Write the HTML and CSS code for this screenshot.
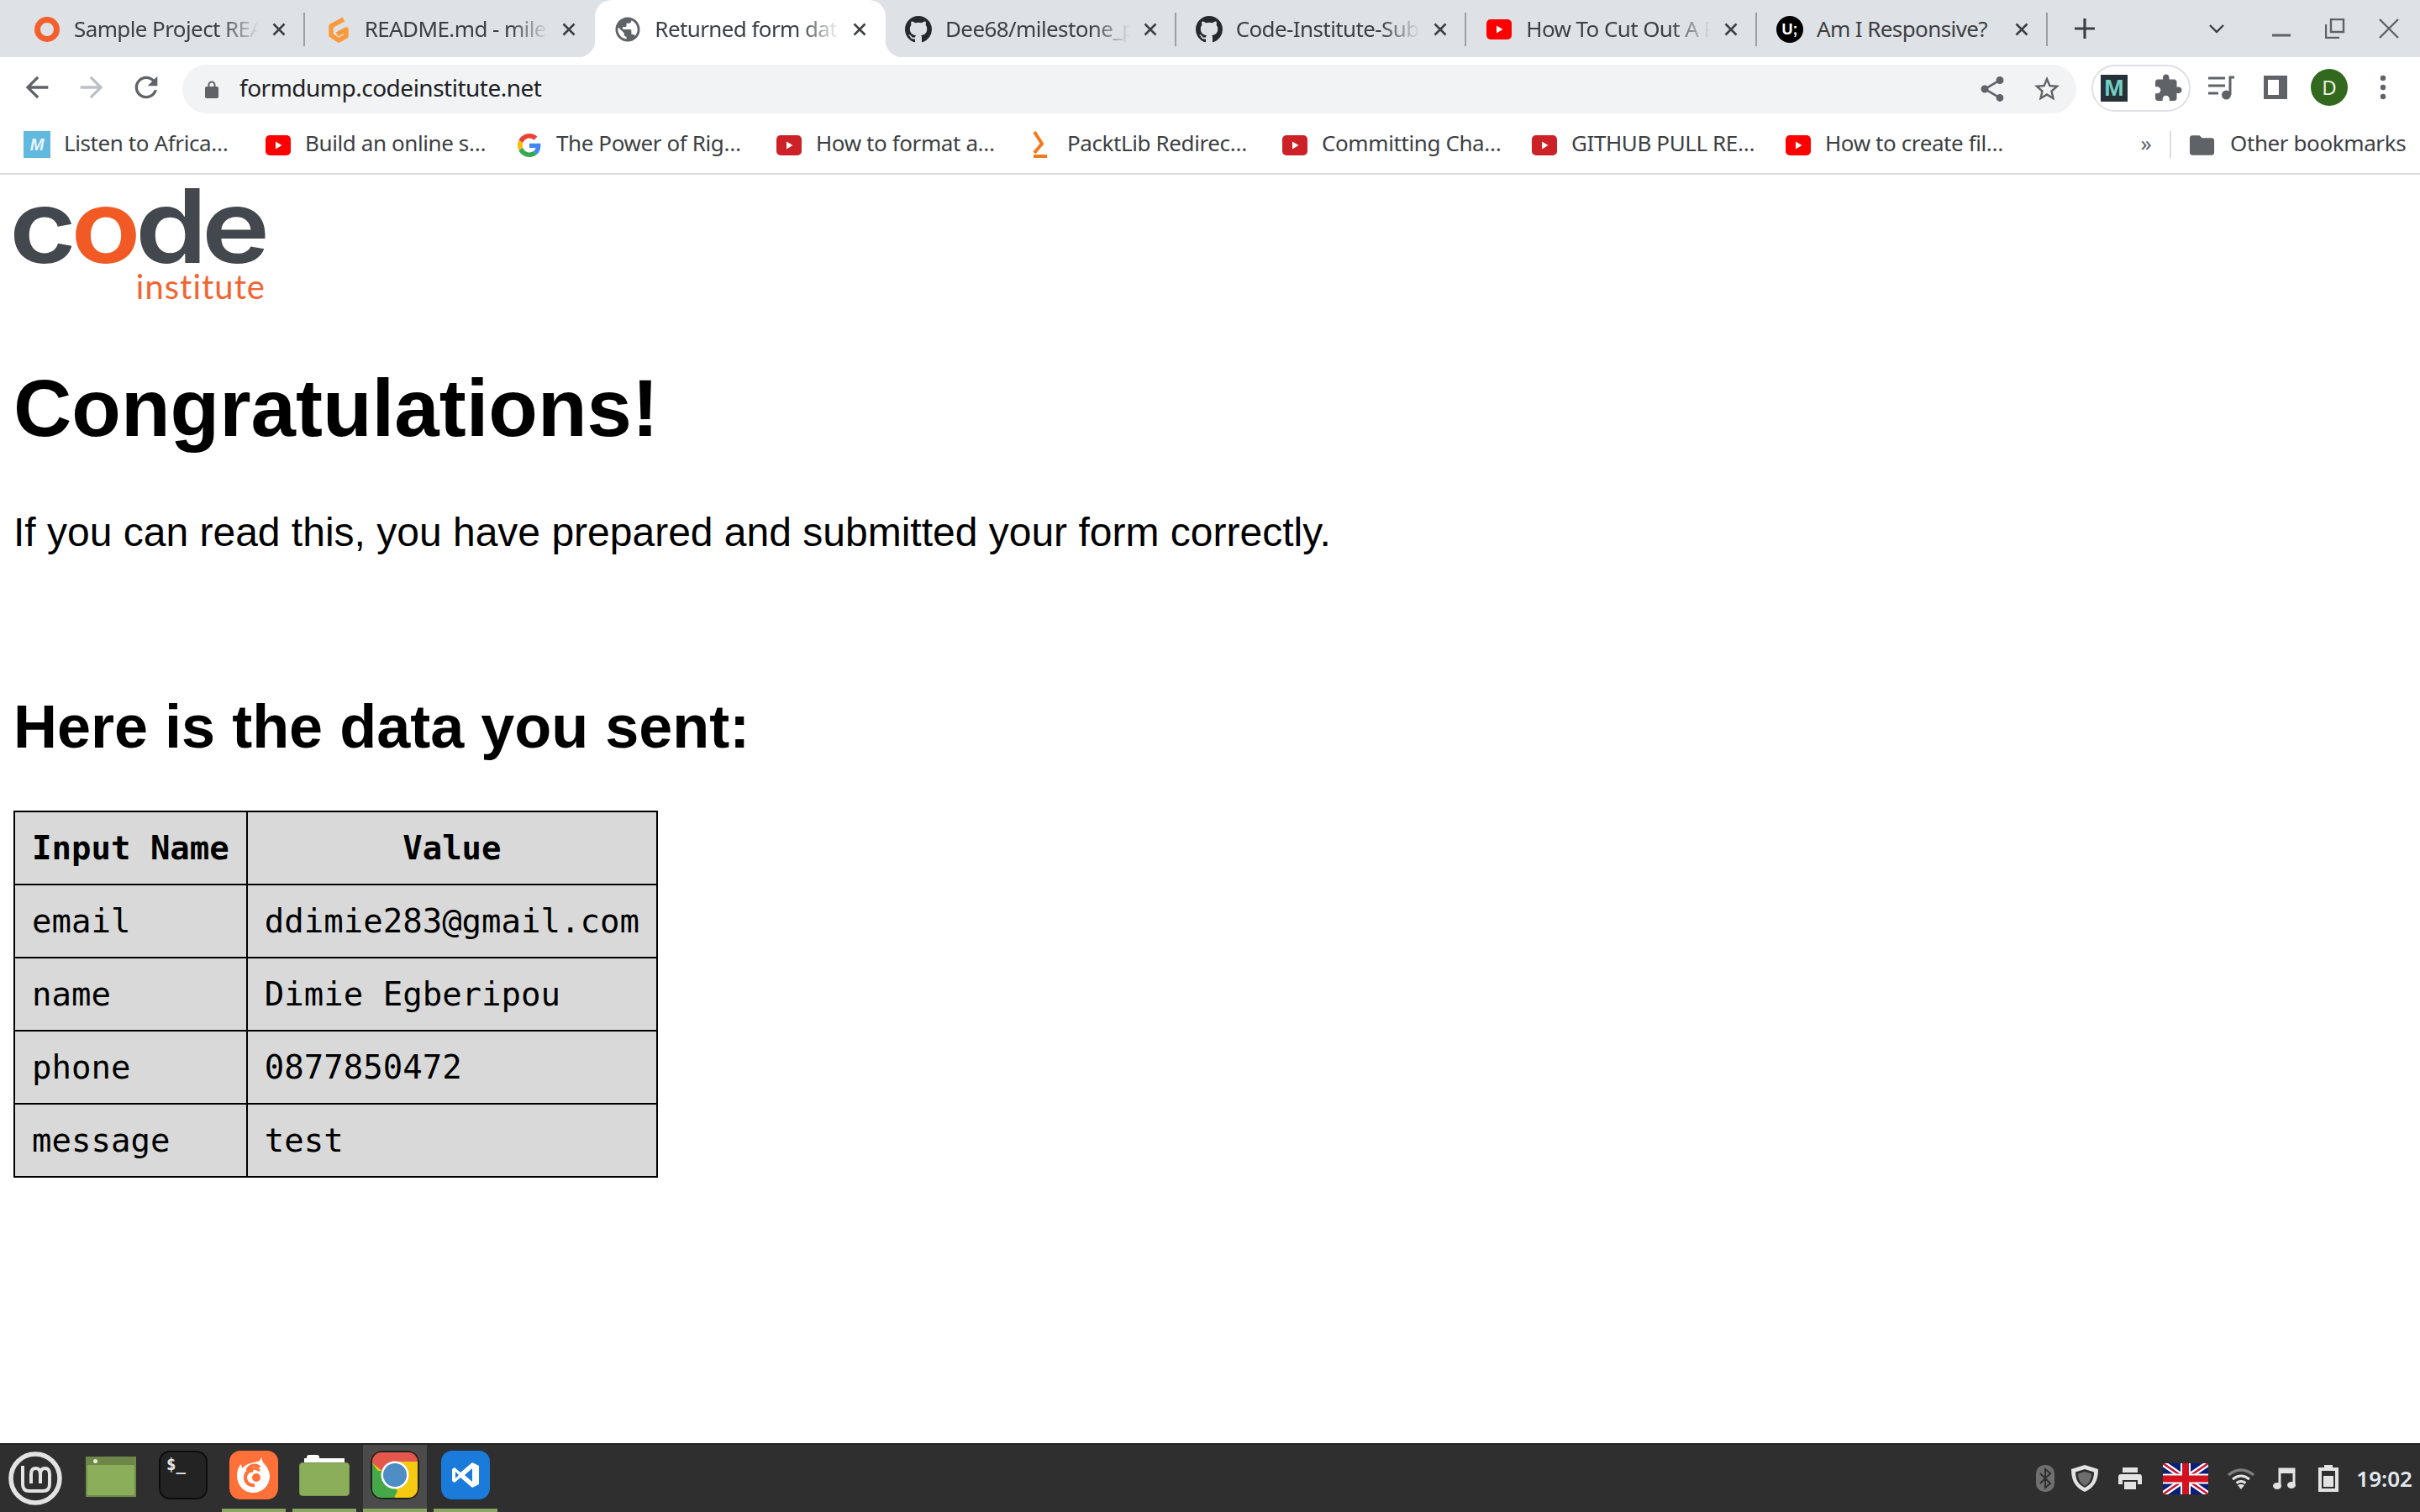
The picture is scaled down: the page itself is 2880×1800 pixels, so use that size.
FILE: index.html
```html
<!DOCTYPE html>
<html lang="en">
<head>
<meta charset="utf-8">
<title>Returned form data</title>
<link rel="stylesheet" href="styles.css">
</head>
<body>
<svg class="defs" width="0" height="0" aria-hidden="true">
  <symbol id="gh" viewBox="0 0 16 16"><path d="M8 0C3.58 0 0 3.58 0 8c0 3.54 2.29 6.53 5.47 7.59.4.07.55-.17.55-.38 0-.19-.01-.82-.01-1.49-2.01.37-2.53-.49-2.69-.94-.09-.23-.48-.94-.82-1.13-.28-.15-.68-.52-.01-.53.63-.01 1.08.58 1.23.82.72 1.21 1.87.87 2.33.66.07-.52.28-.87.51-1.07-1.78-.2-3.64-.89-3.64-3.95 0-.87.31-1.59.82-2.15-.08-.2-.36-1.02.08-2.12 0 0 .67-.21 2.2.82.64-.18 1.32-.27 2-.27.68 0 1.36.09 2 .27 1.53-1.04 2.2-.82 2.2-.82.44 1.1.16 1.92.08 2.12.51.56.82 1.27.82 2.15 0 3.07-1.87 3.75-3.65 3.95.29.25.54.73.54 1.48 0 1.07-.01 1.93-.01 2.2 0 .21.15.46.55.38A8.013 8.013 0 0016 8c0-4.42-3.58-8-8-8z" fill="#24292e"/></symbol>
  <symbol id="x" viewBox="0 0 16 16"><path d="M1.5 1.5l13 13M14.5 1.5l-13 13" stroke="#3c4043" stroke-width="2.6" fill="none"/></symbol>
  <symbol id="yt" viewBox="0 0 32 28"><rect x="1" y="2" width="30" height="24" rx="5" fill="currentColor"/><path d="M13 9.500l7.500 4.500-7.500 4.500z" fill="#fff"/></symbol>
</svg>

<header class="tabstrip">
  <div class="tab">
    <svg class="fav" viewBox="0 0 32 32"><circle cx="16" cy="16" r="11.500" fill="none" stroke="#f4602c" stroke-width="7"/></svg>
    <span class="title">Sample Project README</span>
    <svg class="close"><use href="#x"/></svg>
  </div>
  <div class="tab no-sep">
    <svg class="fav" viewBox="0 0 32 32"><path d="M23 4L8 12v11l9 6 9-5v-8l-11 6" fill="none" stroke="#fb9a3d" stroke-width="5.500" stroke-linejoin="round"/></svg>
    <span class="title">README.md - milestone</span>
    <svg class="close"><use href="#x"/></svg>
  </div>
  <div class="tab active no-sep">
    <svg class="fav" viewBox="1 1 22 22"><path fill="#5f6368" d="M12 2C6.480 2 2 6.480 2 12s4.480 10 10 10 10-4.480 10-10S17.520 2 12 2zm-1 17.930c-3.950-.490-7-3.850-7-7.930 0-.620.080-1.210.210-1.790L9 15v1c0 1.100.900 2 2 2v1.930zm6.900-2.540c-.260-.810-1-1.390-1.900-1.390h-1v-3c0-.550-.450-1-1-1H8v-2h2c.550 0 1-.450 1-1V7h2c1.100 0 2-.900 2-2v-.410c2.930 1.190 5 4.060 5 7.410 0 2.080-.800 3.970-2.100 5.390z"/></svg>
    <span class="title">Returned form data</span>
    <svg class="close"><use href="#x"/></svg>
  </div>
  <div class="tab">
    <svg class="fav"><use href="#gh"/></svg>
    <span class="title">Dee68/milestone_project</span>
    <svg class="close"><use href="#x"/></svg>
  </div>
  <div class="tab">
    <svg class="fav"><use href="#gh"/></svg>
    <span class="title">Code-Institute-Submissions</span>
    <svg class="close"><use href="#x"/></svg>
  </div>
  <div class="tab">
    <svg class="fav yt-red"><use href="#yt"/></svg>
    <span class="title">How To Cut Out A Person</span>
    <svg class="close"><use href="#x"/></svg>
  </div>
  <div class="tab">
    <span class="fav ui-badge">U;</span>
    <span class="title plain">Am I Responsive?</span>
    <svg class="close"><use href="#x"/></svg>
  </div>
  <svg class="newtab" viewBox="0 0 26 26"><path d="M13 1v24M1 13h24" stroke="#3c4043" stroke-width="3.200"/></svg>
  <div class="win-controls">
    <div class="win-btn chev"><svg width="20" height="12" viewBox="0 0 20 12"><path d="M2 2l8 8 8-8" fill="none" stroke="#3c4043" stroke-width="2.400"/></svg></div>
    <div class="win-btn"><svg width="22" height="22" viewBox="0 0 22 22"><path d="M0 19h22" stroke="#5f6368" stroke-width="3"/></svg></div>
    <div class="win-btn"><svg width="24" height="24" viewBox="0 0 24 24"><path d="M7 1h15v15H7zM1 7v16h16" fill="none" stroke="#5f6368" stroke-width="2.400"/></svg></div>
    <div class="win-btn"><svg width="24" height="24" viewBox="0 0 24 24"><path d="M1 1l22 22M23 1L1 23" stroke="#5f6368" stroke-width="2.400"/></svg></div>
  </div>
</header>

<nav class="toolbar">
  <div class="nav-btn"><svg class="ico" viewBox="0 0 24 24"><path fill="#5f6368" d="M20 11H7.830l5.590-5.590L12 4l-8 8 8 8 1.410-1.410L7.830 13H20v-2z"/></svg></div>
  <div class="nav-btn"><svg class="ico flip" viewBox="0 0 24 24"><path fill="#bdc1c6" d="M20 11H7.830l5.590-5.590L12 4l-8 8 8 8 1.410-1.410L7.830 13H20v-2z"/></svg></div>
  <div class="nav-btn"><svg class="ico" viewBox="0 0 24 24"><path fill="#5f6368" d="M17.650 6.350A7.958 7.958 0 0012 4c-4.420 0-7.990 3.580-7.990 8s3.570 8 7.990 8c3.730 0 6.840-2.550 7.730-6h-2.080A5.990 5.990 0 0112 18c-3.310 0-6-2.690-6-6s2.690-6 6-6c1.660 0 3.140.690 4.220 1.780L13 11h7V4l-2.350 2.350z"/></svg></div>
  <div class="omnibox">
    <svg class="lock" viewBox="0 0 16 22"><path d="M4.500 9V6a3.500 3.500 0 017 0v3" fill="none" stroke="#5f6368" stroke-width="2"/><rect x="0" y="8" width="16" height="14" rx="2" fill="#5f6368"/></svg>
    <span class="url">formdump.codeinstitute.net</span>
    <div class="omni-actions">
      <svg class="ico-s" viewBox="0 0 24 24"><path fill="#5f6368" d="M18 16.080c-.760 0-1.440.300-1.960.770L8.910 12.700c.050-.230.090-.460.090-.700s-.040-.470-.090-.700l7.050-4.110c.540.500 1.250.810 2.040.810 1.660 0 3-1.340 3-3s-1.340-3-3-3-3 1.340-3 3c0 .240.040.470.090.700L8.040 9.810C7.500 9.310 6.790 9 6 9c-1.660 0-3 1.340-3 3s1.340 3 3 3c.790 0 1.500-.310 2.040-.810l7.120 4.160c-.050.210-.080.430-.080.650 0 1.610 1.310 2.920 2.920 2.920s2.920-1.310 2.920-2.920-1.310-2.920-2.920-2.920z"/></svg>
      <svg class="ico-s" viewBox="0 0 24 24"><path fill="#5f6368" d="M22 9.240l-7.190-.620L12 2 9.190 8.630 2 9.240l5.460 4.730L5.820 21 12 17.270 18.180 21l-1.630-7.030L22 9.240zM12 15.400l-3.760 2.270 1-4.280-3.320-2.880 4.380-.380L12 6.100l1.710 4.040 4.380.380-3.320 2.880 1 4.280L12 15.400z"/></svg>
    </div>
  </div>
  <div class="ext-pill">
    <span class="ext-m">M</span>
    <svg class="ico-s puzzle" viewBox="0 0 24 24"><path fill="#5f6368" d="M20.500 11H19V7c0-1.100-.900-2-2-2h-4V3.500C13 2.120 11.880 1 10.500 1S8 2.120 8 3.500V5H4c-1.100 0-1.990.900-1.990 2v3.800H3.500c1.490 0 2.700 1.210 2.700 2.700s-1.210 2.700-2.700 2.700H2V20c0 1.100.900 2 2 2h3.800v-1.500c0-1.490 1.210-2.700 2.700-2.700 1.490 0 2.700 1.210 2.700 2.700V22H17c1.100 0 2-.900 2-2v-4h1.500c1.380 0 2.500-1.120 2.500-2.500S21.880 11 20.500 11z"/></svg>
  </div>
  <div class="tool-btn"><svg class="tool-ico" viewBox="0 0 32 30"><path d="M0 4h20M0 13h20M0 22h12" stroke="#5f6368" stroke-width="3"/><path d="M26 24V3h5" fill="none" stroke="#5f6368" stroke-width="3"/><circle cx="21.500" cy="24" r="5.500" fill="#5f6368"/></svg></div>
  <div class="tool-btn"><span class="sidebar-ico"></span></div>
  <div class="tool-btn"><span class="avatar">D</span></div>
  <div class="tool-btn"><svg class="dots" viewBox="0 0 8 30"><circle cx="4" cy="4" r="3.200" fill="#5f6368"/><circle cx="4" cy="15" r="3.200" fill="#5f6368"/><circle cx="4" cy="26" r="3.200" fill="#5f6368"/></svg></div>
</nav>

<nav class="bookmarks">
  <div class="bm"><span class="bm-ico bm-m">M</span><span>Listen to Africa…</span></div>
  <div class="bm"><svg class="bm-ico yt-red"><use href="#yt"/></svg><span>Build an online s…</span></div>
  <div class="bm"><svg class="bm-ico" viewBox="0 0 48 48"><path fill="#EA4335" d="M24 9.500c3.540 0 6.710 1.220 9.210 3.600l6.850-6.850C35.900 2.380 30.470 0 24 0 14.620 0 6.510 5.380 2.560 13.220l7.980 6.190C12.430 13.720 17.740 9.500 24 9.500z"/><path fill="#4285F4" d="M46.980 24.550c0-1.570-.150-3.090-.380-4.550H24v9.020h12.940c-.580 2.960-2.260 5.480-4.780 7.180l7.730 6c4.510-4.180 7.090-10.360 7.090-17.650z"/><path fill="#FBBC05" d="M10.530 28.590c-.480-1.450-.760-2.990-.760-4.590s.270-3.140.760-4.590l-7.980-6.190C.920 16.460 0 20.120 0 24c0 3.880.920 7.540 2.560 10.780l7.970-6.190z"/><path fill="#34A853" d="M24 48c6.480 0 11.930-2.130 15.890-5.810l-7.730-6c-2.150 1.450-4.920 2.300-8.160 2.300-6.260 0-11.570-4.220-13.470-9.910l-7.980 6.190C6.510 42.620 14.620 48 24 48z"/></svg><span>The Power of Rig…</span></div>
  <div class="bm"><svg class="bm-ico yt-dark"><use href="#yt"/></svg><span>How to format a…</span></div>
  <div class="bm"><svg class="bm-ico bm-tall" viewBox="0 0 32 32"><path d="M9 1l9 14-9 11" fill="none" stroke="#f47a20" stroke-width="4"/><path d="M8 30h16" stroke="#f47a20" stroke-width="4"/></svg><span>PacktLib Redirec…</span></div>
  <div class="bm"><svg class="bm-ico yt-dark"><use href="#yt"/></svg><span>Committing Cha…</span></div>
  <div class="bm"><svg class="bm-ico yt-dark"><use href="#yt"/></svg><span>GITHUB PULL RE…</span></div>
  <div class="bm"><svg class="bm-ico yt-red"><use href="#yt"/></svg><span>How to create fil…</span></div>
  <span class="more">»</span>
  <span class="bm-sep"></span>
  <div class="bm"><svg class="bm-ico" viewBox="2 3 22 18"><path fill="#5f6368" d="M10 4H4c-1.100 0-2 .900-2 2v12c0 1.100.900 2 2 2h16c1.100 0 2-.900 2-2V8c0-1.100-.900-2-2-2h-8l-2-2z"/></svg><span>Other bookmarks</span></div>
</nav>

<main class="page">
  <div class="logo">
    <div class="logo-code">c<span class="logo-o">o</span>de</div>
    <div class="logo-inst">institute</div>
  </div>
  <h1>Congratulations!</h1>
  <p>If you can read this, you have prepared and submitted your form correctly.</p>
  <h2>Here is the data you sent:</h2>
  <table>
    <thead><tr><th>Input Name</th><th>Value</th></tr></thead>
    <tbody>
      <tr><td>email</td><td>ddimie283@gmail.com</td></tr>
      <tr><td>name</td><td>Dimie Egberipou</td></tr>
      <tr><td>phone</td><td>0877850472</td></tr>
      <tr><td>message</td><td>test</td></tr>
    </tbody>
  </table>
</main>

<footer class="taskbar">
  <div class="mint"><svg viewBox="0 0 64 64" width="64" height="64"><circle cx="32" cy="32" r="29" fill="none" stroke="#e3e3e3" stroke-width="5.500"/><path d="M17 17v22q0 8 8 8h16q8 0 8-8V27q0-7-5.500-7T38 27v11M38 27q0-7-5.500-7T27 27v11" fill="none" stroke="#e3e3e3" stroke-width="4"/></svg></div>
  <div class="launch">
    <div class="launch-item"><div class="win-ico"><span></span></div></div>
    <div class="launch-item"><div class="term-ico">$_</div></div>
    <div class="launch-item running">
      <svg class="app" viewBox="0 0 58 58"><rect width="58" height="58" rx="13" fill="#ff7139"/><path d="M9 29c0-5 2-10 5-13l1 5c3-3 6-5 10-6 5-1 8-2 11-3 1-2 2-3 2-5 1 4 1 6 3 8 4 5 7 9 7 15 0 12-9 20-20 20S9 41 9 29z" fill="#fff"/><path d="M36 20c-4-4-11-3-14 2-1 2 4 1 6 2-4-1-9 2-9 8 0 6 5 10 11 9" fill="none" stroke="#ff7139" stroke-width="4"/><path d="M24 23c4-3 9-2 12 1" fill="none" stroke="#ff7139" stroke-width="3"/><circle cx="32" cy="32" r="5" fill="#ff7139"/></svg>
    </div>
    <div class="launch-item running"><div class="folder-ico"><span class="folder-tab"></span><span class="folder-paper"></span><span class="folder-body"></span></div></div>
    <div class="launch-item running hovered">
      <svg class="app" viewBox="0 0 58 58"><defs><clipPath id="cr"><rect width="58" height="58" rx="13"/></clipPath></defs><g clip-path="url(#cr)"><rect width="58" height="58" fill="#f6c913"/><path d="M0 0h58v13H29L16 26 0 13z" fill="#e4574c"/><path d="M0 12l22 30 8 16H0z" fill="#45a848"/><path d="M15 24l17 24-5 10H0V24z" fill="#45a848"/><circle cx="29" cy="29" r="16.500" fill="#fff"/><circle cx="29" cy="29" r="14" fill="#4f8ec4"/></g><rect x="1" y="1" width="56" height="56" rx="12" fill="none" stroke="#222" stroke-width="2"/></svg>
    </div>
    <div class="launch-item running">
      <svg class="app" viewBox="0 0 58 58"><rect width="58" height="58" rx="13" fill="#1b7bdb"/><path d="M37 14l8 4v22l-8 4-14-12-7 6-3-2V22l3-2 7 6zM37 21l-9 8 9 8zM17 25v8l4-4z" fill="#fff" fill-rule="evenodd"/></svg>
    </div>
  </div>
  <div class="tray">
    <svg class="t-bt" viewBox="0 0 22 32"><rect width="22" height="32" rx="10" fill="#6f6f6f"/><path d="M5 10l12 12-6 5V5l6 5L5 22" fill="none" stroke="#2f2f2f" stroke-width="2"/></svg>
    <svg class="t-shield" viewBox="0 0 32 32"><path d="M16 0l16 5c0 14-5 22-16 27C5 27 0 19 0 5z" fill="#e3e3e3"/><path d="M16 5l11 3.500c0 10-4 15-11 18.500C9 23.500 5 18.500 5 8.500z" fill="#2f2f2f"/><path d="M16 8l8 2.500c0 7-3 11.500-8 14.500-5-3-8-7.500-8-14.500z" fill="#6d6d6d"/></svg>
    <svg class="t-print" viewBox="0 0 28 26"><path fill="#e3e3e3" d="M5 0h18v6H5zM3 8h22q3 0 3 3v9h-5v-5H5v5H0v-9q0-3 3-3zM7 17h14v9H7z"/></svg>
    <svg class="t-flag" viewBox="0 0 54 37"><rect width="54" height="37" rx="2" fill="#0a1f78"/><path d="M0 0l54 37M54 0L0 37" stroke="#fff" stroke-width="7"/><path d="M0 0l54 37M54 0L0 37" stroke="#c8102e" stroke-width="2.400"/><path d="M27 0v37M0 18.500h54" stroke="#fff" stroke-width="12"/><path d="M27 0v37M0 18.500h54" stroke="#d3131f" stroke-width="8"/></svg>
    <svg class="t-wifi" viewBox="0 0 32 26"><path d="M1 9q15-12 30 0" fill="none" stroke="#7d7d7d" stroke-width="3.500"/><path d="M6 14q10-8 20 0M10.500 18.500q5.500-4 11 0" fill="none" stroke="#e3e3e3" stroke-width="3"/><path d="M16 26l-4-5q4-2 8 0z" fill="#e3e3e3"/></svg>
    <svg class="t-music" viewBox="0 0 27 26"><path d="M8 22V2h17v18" fill="none" stroke="#e3e3e3" stroke-width="3"/><path d="M8 1h18v6H8z" fill="#e3e3e3"/><ellipse cx="5" cy="22" rx="5" ry="4" fill="#e3e3e3"/><ellipse cx="22" cy="21" rx="5" ry="4" fill="#e3e3e3"/></svg>
    <svg class="t-batt" viewBox="0 0 24 32"><path d="M7 0h10v3h7v29H0V3h7zM4 7v21h16V7z" fill="#e3e3e3" fill-rule="evenodd"/><rect x="6" y="13" width="12" height="13" fill="#e3e3e3"/></svg>
    <span class="clock">19:02</span>
  </div>
</footer>
</body>
</html>
```
FILE: styles.css
```css
* { box-sizing: border-box; }
html, body { margin: 0; padding: 0; }
body {
  width: 2880px;
  height: 1800px;
  overflow: hidden;
  display: flex;
  flex-direction: column;
  background: #fff;
  font-family: "Liberation Sans", Arial, sans-serif;
}
.defs { position: absolute; }

/* tab strip */
.tabstrip {
  height: 68px;
  flex: none;
  display: flex;
  align-items: stretch;
  padding-left: 17px;
  background: #dee1e6;
  font-family: "Noto Sans", sans-serif;
}
.tab {
  position: relative;
  width: 345.67px;
  flex: none;
  display: flex;
  align-items: center;
  gap: 16px;
  padding: 2px 23px 0 23px;
  color: #3c4043;
}
.tab::after {
  content: "";
  position: absolute;
  right: 0;
  top: 15px;
  width: 2px;
  height: 40px;
  background: #9aa0a6;
}
.tab.no-sep::after { display: none; }
.tab.active {
  background: #fff;
  border-radius: 20px 20px 0 0;
}
.tab.active::before,
.tab.active::after {
  content: "";
  display: block;
  position: absolute;
  top: auto;
  bottom: 0;
  width: 20px;
  height: 20px;
}
.tab.active::before {
  left: -20px;
  background: radial-gradient(circle at 0 0, transparent 20px, #fff 20.5px);
}
.tab.active::after {
  right: -20px;
  background: radial-gradient(circle at 100% 0, transparent 20px, #fff 20.5px);
}
.fav { width: 32px; height: 32px; flex: none; }
.yt-red { color: #f00; }
.yt-dark { color: #cc2127; }
.ui-badge {
  border-radius: 50%;
  background: #000;
  color: #fff;
  font: 700 18px/32px "Liberation Sans", sans-serif;
  text-align: center;
}
.title {
  flex: 1;
  min-width: 0;
  overflow: hidden;
  white-space: nowrap;
  font-size: 26px;
  line-height: 36px;
  margin-top: -3px;
  letter-spacing: -0.6px;
  -webkit-mask-image: linear-gradient(to right, #000 79%, transparent 100%);
  mask-image: linear-gradient(to right, #000 79%, transparent 100%);
}
.title.plain { -webkit-mask-image: none; mask-image: none; }
.close { width: 16px; height: 16px; flex: none; }
.newtab { width: 26px; height: 26px; flex: none; margin: 21px 0 0 31px; }
.win-controls { margin-left: auto; padding-right: 5px; display: flex; }
.win-btn { width: 64px; display: flex; align-items: center; justify-content: center; }
.win-btn.chev { margin-right: 13px; }

/* toolbar */
.toolbar {
  height: 72px;
  flex: none;
  display: flex;
  align-items: center;
  padding: 0 12px 0 11px;
  font-family: "Noto Sans", sans-serif;
}
.nav-btn { width: 65px; display: flex; justify-content: center; flex: none; }
.ico { width: 40px; height: 40px; flex: none; }
.ico-s { width: 36px; height: 36px; flex: none; }
.flip { transform: scaleX(-1); }
.omnibox {
  flex: 1;
  height: 58px;
  margin: 4px 0 0 11px;
  padding: 0 17px 0 27px;
  display: flex;
  align-items: center;
  gap: 25px;
  background: #f1f3f4;
  border-radius: 29px;
}
.lock { width: 16px; height: 22px; flex: none; }
.url { font-size: 28px; line-height: 36px; margin-top: -4px; letter-spacing: -0.5px; color: #202124; }
.omni-actions { margin-left: auto; display: flex; gap: 29px; }
.ext-pill {
  width: 118px;
  height: 56px;
  margin: 2px 5px 0 18px;
  padding-left: 9px;
  display: flex;
  align-items: center;
  flex: none;
  border: 2px solid #dfe1e5;
  border-radius: 28px;
}
.ext-m {
  width: 32px;
  height: 32px;
  flex: none;
  background: #263238;
  color: #75cfc4;
  font: 700 28px/32px "Liberation Sans", sans-serif;
  text-align: center;
}
.puzzle { margin-left: 30px; }
.tool-btn { width: 64px; flex: none; display: flex; justify-content: center; align-items: center; }
.tool-ico { width: 32px; height: 30px; }
.sidebar-ico {
  width: 28px;
  height: 28px;
  border: 5px solid #5f6368;
  border-right-width: 10px;
}
.avatar {
  width: 44px;
  height: 44px;
  border-radius: 50%;
  background: #33691e;
  color: #e8f0e4;
  font-size: 24px;
  line-height: 44px;
  text-align: center;
}
.dots { width: 8px; height: 30px; }

/* bookmarks */
.bookmarks {
  height: 68px;
  flex: none;
  display: grid;
  grid-template-columns: 287px 299px 309px 299px 303px 297px 302px 406px 48px 28px 1fr;
  align-items: center;
  padding: 0 0 6px 28px;
  border-bottom: 2px solid #dadce0;
  font-family: "Noto Sans", sans-serif;
  font-size: 26px;
  letter-spacing: -0.4px;
  color: #3c4043;
}
.bm { display: flex; align-items: center; gap: 16px; white-space: nowrap; }
.bm-ico { width: 32px; height: 28px; flex: none; margin-top: 5px; }
.bm-tall { height: 32px; margin-top: 3px; }
.bm-m {
  height: 32px;
  margin-top: 3px;
  background: #62b9de;
  color: #e8f6fb;
  font: italic 700 20px/32px "Liberation Sans", sans-serif;
  text-align: center;
}
.more { font-size: 26px; color: #5f6368; justify-self: center; }
.bm-sep { width: 2px; height: 32px; margin: 4px 0 0 4px; background: #dadce0; }

/* page */
.page { flex: 1; min-height: 0; padding: 16px 16px 0; color: #000; }
.logo { width: 300px; }
.logo-code {
  font: 600 122px/89px Inter, sans-serif;
  letter-spacing: -6px;
  color: #43474e;
  white-space: nowrap;
  height: 89px;
  transform: scaleX(1.125);
  transform-origin: left center;
  margin-left: -5px;
}
.logo-o { color: #f15a24; }
.logo-inst {
  font: 400 40px/30px Lato, sans-serif;
  letter-spacing: 1px;
  color: #f26532;
  text-align: right;
  margin-top: 13px;
}
h1 { font-size: 96px; line-height: 110px; margin: 75px 0 0; font-weight: 700; }
p { font-size: 48px; line-height: 56px; margin: 65px 0 0; }
h2 { font-size: 72px; line-height: 82px; margin: 162px 0 0; font-weight: 700; }
table {
  border-collapse: collapse;
  margin-top: 59px;
  font-family: "DejaVu Sans Mono", monospace;
  font-size: 39px;
  background: #d9d9d9;
  border: 2px solid #000;
}
th, td {
  height: 87px;
  padding: 0 20px;
  border: 2px solid #000;
  text-align: left;
}
th { text-align: center; font-weight: 700; }

/* taskbar */
.taskbar {
  height: 82px;
  flex: none;
  display: flex;
  align-items: stretch;
  background: #2f2f2f;
  border-top: 2px solid #222;
}
.mint { width: 96px; padding-left: 10px; display: flex; align-items: center; flex: none; }
.launch { display: flex; gap: 8px; }
.launch-item {
  width: 76px;
  display: flex;
  align-items: center;
  justify-content: center;
  padding-bottom: 4px;
  border-bottom: 4px solid transparent;
}
.launch-item.running { border-bottom-color: #8ba565; }
.launch-item.hovered { background: #4b4b4b; }
.app { width: 58px; height: 58px; }
.win-ico {
  position: relative;
  width: 60px;
  height: 48px;
  margin: 4px 4px 0 0;
  background: #8bae5b;
  border: 2px solid #6f8a4a;
  border-top: 10px solid #6d8748;
}
.win-ico span {
  position: absolute;
  top: -7px;
  left: 7px;
  width: 5px;
  height: 5px;
  background: #e9efdf;
  border-radius: 50%;
}
.term-ico {
  width: 58px;
  height: 58px;
  padding: 2px 0 0 7px;
  border-radius: 13px;
  background: #232323;
  border: 2px solid #0d0d0d;
  color: #e6e6e6;
  font: 700 19px/24px "DejaVu Sans Mono", monospace;
}
.folder-ico { position: relative; width: 60px; height: 49px; }
.folder-tab { position: absolute; left: 9px; top: 0; width: 15px; height: 8px; background: #fff; border-radius: 3px; }
.folder-paper { position: absolute; left: 6px; right: 6px; top: 4px; height: 8px; background: #fff; }
.folder-body { position: absolute; left: 0; right: 0; top: 9px; bottom: 0; background: #8bae5b; border-radius: 4px; border: 1.500px solid #79984d; }
.tray {
  margin-left: auto;
  display: flex;
  align-items: center;
  padding: 0 9px 0 0;
}
.t-bt { width: 22px; height: 32px; margin-right: 20px; }
.t-shield { width: 32px; height: 32px; margin-right: 24px; }
.t-print { width: 28px; height: 26px; margin-right: 25px; }
.t-flag { width: 54px; height: 37px; margin-right: 23px; }
.t-wifi { width: 32px; height: 26px; margin-right: 22px; }
.t-music { width: 27px; height: 26px; margin-right: 27px; }
.t-batt { width: 24px; height: 32px; margin-right: 21px; }
.clock { font: 600 26px/32px "Noto Sans", sans-serif; color: #e3e8ee; }
```
